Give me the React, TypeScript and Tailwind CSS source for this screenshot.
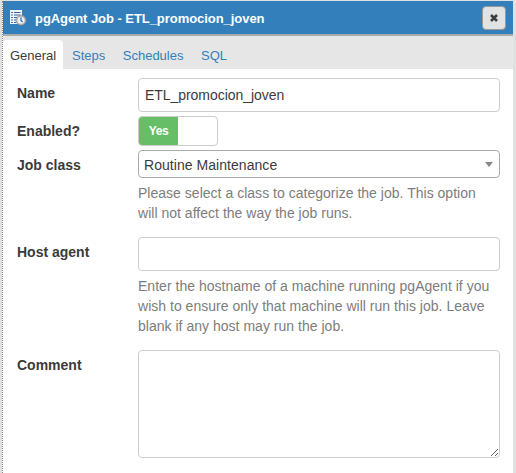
import type { ReactNode } from "react";

const tabs = ["General", "Steps", "Schedules", "SQL"];

function JobIcon() {
  return (
    <svg width="16" height="16" viewBox="0 0 16 16" className="shrink-0">
      <path d="M0 0h12v14H0z" fill="#f1f5f8" />
      <path d="M1.2 2.5h1.6M1.2 5h1.6M1.2 7.5h1.6M1.2 10h1.6M1.2 12.5h1.6" stroke="#2d4f86" strokeWidth="1.1" />
      <path d="M4 2.5h6.5M4 5h6.5M4 7.5h3M4 10h2M4 12.5h2.5" stroke="#3f61a0" strokeWidth="1.1" />
      <circle cx="11" cy="10.3" r="4.3" fill="#eff4f8" stroke="#b5b3ae" strokeWidth="1.5" />
      <circle cx="11" cy="10.3" r="5" fill="none" stroke="#85898d" strokeWidth="0.5" />
      <path d="M11 7.3v3.4l1.7 1.2" fill="none" stroke="#2467c5" strokeWidth="1.2" />
    </svg>
  );
}

function Row({ label, className, children }: { label: string; className: string; children: ReactNode }) {
  return (
    <div className={`flex ${className}`}>
      <div className="w-[121px] shrink-0 pt-[5px] font-bold leading-5">{label}</div>
      <div className="w-[362px]">{children}</div>
    </div>
  );
}

function Help({ lines }: { lines: string[] }) {
  return (
    <div className="pt-[5px] leading-5 tracking-[0.02px] text-[#7d7d7d]">
      {lines.map((line) => (
        <p key={line} className="whitespace-nowrap">{line}</p>
      ))}
    </div>
  );
}

export default function App() {
  return (
    <div className="h-[473px] w-[516px] overflow-hidden bg-[#dfe1e0] pl-[2px] pr-[3px] pt-px font-['Liberation_Sans',Arial,sans-serif] text-sm text-[#3b3b3b]">
      <div className="h-full border-l border-dotted border-[#888] bg-white">
        <header className="flex h-[33px] items-center bg-[#337fbb] pl-[7px] pr-[7px]">
          <JobIcon />
          <h1 className="ml-[9px] flex-1 whitespace-nowrap pt-[3px] text-[13px] font-bold tracking-[-0.05px] text-white">pgAgent Job - ETL_promocion_joven</h1>
          <button aria-label="Close" className="flex h-6 w-6 items-center justify-center rounded border border-[#999] bg-[#e1e3e2]">
            <svg width="8" height="8" viewBox="0 0 8 8">
              <path d="M1 1l6 6M7 1L1 7" stroke="#3d3d3d" strokeWidth="2.6" />
            </svg>
          </button>
        </header>

        <nav className="flex h-[35px] border-t-2 border-[#aaacac] bg-[#e6e6e6] pt-1 text-[13px]">
          {tabs.map((tab, i) => (
            <button
              key={tab}
              className={i === 0 ? "h-full w-[60px] rounded-t bg-white pt-[3px] text-[#3b3b3b]" : "ml-[9px] mr-[8.5px] h-full pt-[3px] text-[#337fbb]"}
            >
              {tab}
            </button>
          ))}
        </nav>

        <form className="pl-[14px] pt-[9px]">
          <Row label="Name" className="h-[38px]">
            <input
              defaultValue="ETL_promocion_joven"
              className="block h-[34px] w-full rounded border border-[#ccc] bg-white px-[6px] text-sm tracking-[-0.05px] text-[#3b3b3b] outline-none"
            />
          </Row>
          <Row label="Enabled?" className="h-[34px]">
            <div className="flex h-[30px] w-20 overflow-hidden rounded border border-[#ccc]">
              <span className="flex w-[39px] items-center justify-center bg-[#66bf67] pb-px text-xs font-bold tracking-[-0.4px] text-white">Yes</span>
            </div>
          </Row>
          <Row label="Job class" className="h-[87px]">
            <div className="flex h-7 items-center justify-between rounded border border-[#aaa] pl-[5px] pr-[6px]">
              <span className="pt-[2px] tracking-[0.05px]">Routine Maintenance</span>
              <svg width="8" height="5" viewBox="0 0 8 5">
                <path d="M0 0h8L4 5z" fill="#888" />
              </svg>
            </div>
            <Help lines={["Please select a class to categorize the job. This option", "will not affect the way the job runs."]} />
          </Row>
          <Row label="Host agent" className="h-[113px]">
            <input className="block h-[34px] w-full rounded border border-[#ccc] bg-white px-[6px] outline-none" />
            <Help
              lines={[
                "Enter the hostname of a machine running pgAgent if you",
                "wish to ensure only that machine will run this job. Leave",
                "blank if any host may run the job.",
              ]}
            />
          </Row>
          <Row label="Comment" className="h-[108px]">
            <textarea className="block h-[108px] w-full rounded border border-[#ccc] bg-white outline-none" />
          </Row>
        </form>
      </div>
    </div>
  );
}
